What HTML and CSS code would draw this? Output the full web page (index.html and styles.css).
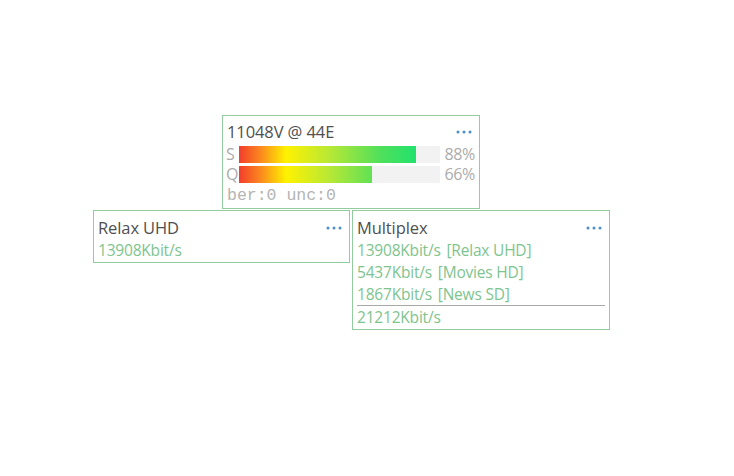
FILE: index.html
```html
<!DOCTYPE html>
<html>
<head>
<meta charset="utf-8">
<link rel="stylesheet" href="styles.css">
</head>
<body>
<div class="canvas">
  <div class="node node-tp">
    <div class="head"><span class="title">11048V @ 44E</span><svg class="dots" width="16" height="4" viewBox="0 0 16 4"><circle cx="2" cy="2" r="1.5"/><circle cx="8" cy="2" r="1.5"/><circle cx="14" cy="2" r="1.5"/></svg></div>
    <div class="meter"><span class="lbl">S</span><div class="track"><div class="fill" style="width:88%"></div></div><span class="pct">88%</span></div>
    <div class="meter"><span class="lbl">Q</span><div class="track"><div class="fill" style="width:66%"></div></div><span class="pct">66%</span></div>
    <div class="mono">ber:0 unc:0</div>
  </div>
  <div class="node node-svc">
    <div class="head"><span class="title">Relax UHD</span><svg class="dots" width="16" height="4" viewBox="0 0 16 4"><circle cx="2" cy="2" r="1.5"/><circle cx="8" cy="2" r="1.5"/><circle cx="14" cy="2" r="1.5"/></svg></div>
    <div class="rate">13908Kbit/s</div>
  </div>
  <div class="node node-mux">
    <div class="head"><span class="title">Multiplex</span><svg class="dots" width="16" height="4" viewBox="0 0 16 4"><circle cx="2" cy="2" r="1.5"/><circle cx="8" cy="2" r="1.5"/><circle cx="14" cy="2" r="1.5"/></svg></div>
    <div class="rate">13908Kbit/s <span class="tag">[Relax UHD]</span></div>
    <div class="rate">5437Kbit/s <span class="tag">[Movies HD]</span></div>
    <div class="rate">1867Kbit/s <span class="tag">[News SD]</span></div>
    <div class="rate total">21212Kbit/s</div>
  </div>
</div>
</body>
</html>
```
FILE: styles.css
```css
html, body {
  margin: 0;
  padding: 0;
  background: #ffffff;
}
.canvas {
  position: relative;
  width: 734px;
  height: 476px;
  font-family: "Open Sans", "Noto Sans", sans-serif;
  font-size: 15.5px;
  color: #505050;
}
.node {
  position: absolute;
  box-sizing: border-box;
  border: 1px solid #93cc9f;
  background: #fff;
  padding: 5px 4px 0 4px;
}
.node-tp { left: 222px; top: 115px; width: 258px; height: 94px; padding-top: 4px; }
.node-svc { left: 93px; top: 210px; width: 257px; height: 53px; }
.node-mux { left: 352px; top: 210px; width: 258px; height: 120px; }
.head {
  display: flex;
  justify-content: space-between;
  align-items: center;
  height: 23px;
  line-height: 22px;
}
.title {
  font-size: 16.5px;
  letter-spacing: -0.1px;
}
.dots {
  fill: #4a8fc9;
  margin-right: 3px;
}
.node-tp .head { height: 23px; margin-bottom: 1px; }
.meter {
  display: grid;
  grid-template-columns: 12px 201px 1fr;
  align-items: center;
  height: 20px;
  color: #ababab;
  font-size: 16px;
}
.lbl { line-height: 20px; margin-left: -1px; }
.track {
  height: 17px;
  background: #f2f2f2;
  position: relative;
  overflow: hidden;
}
.fill {
  height: 100%;
  background-image: linear-gradient(90deg, #f23d2c 0px, #fb8a1e 22px, #fff200 47px, #b4e836 92px, #52e05a 140px, #00e37a 201px);
  background-size: 201px 100%;
}
.pct {
  text-align: right;
  line-height: 20px;
  letter-spacing: -0.3px;
}
.mono {
  font-family: "Liberation Mono", "DejaVu Sans Mono", monospace;
  font-size: 16.5px;
  color: #b4b4b4;
  line-height: 22px;
  height: 22px;
  margin-top: 1px;
}
.rate {
  color: #7ec48e;
  line-height: 22px;
  height: 22px;
  letter-spacing: -0.2px;
}
.tag {
  margin-left: 2px;
}
.total {
  border-top: 1px solid #a8a8a8;
}
```
